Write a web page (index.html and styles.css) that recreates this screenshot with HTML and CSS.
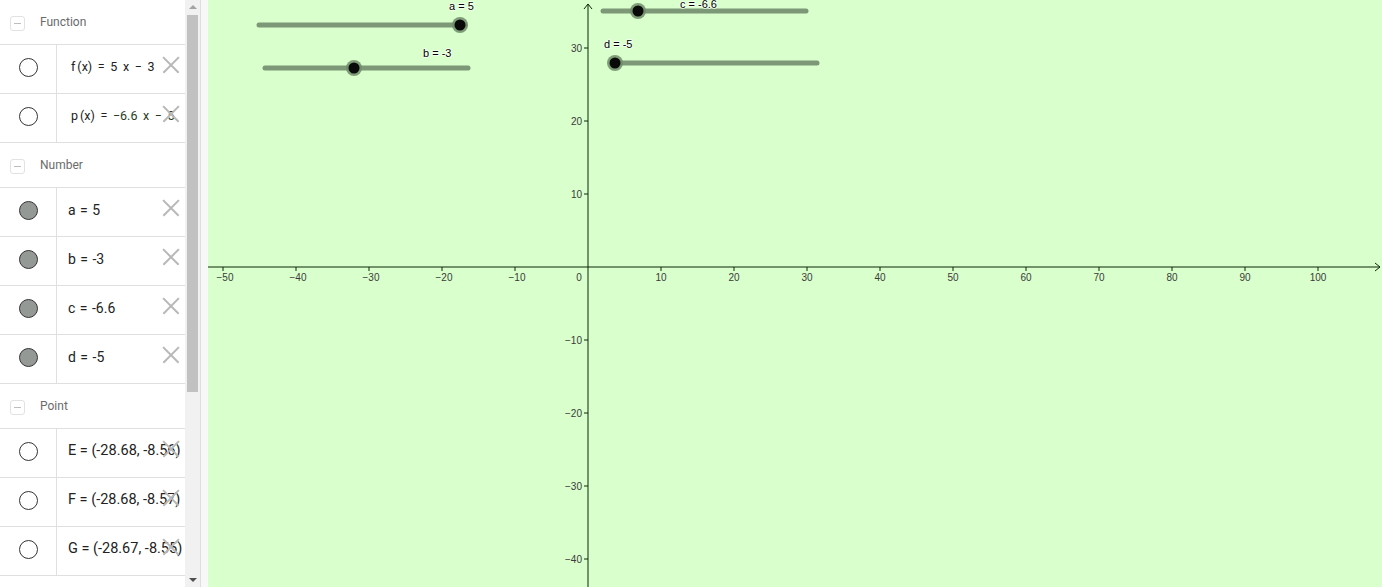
FILE: index.html
```html
<!DOCTYPE html>
<html>
<head>
<meta charset="utf-8">
<link rel="stylesheet" href="styles.css">
</head>
<body>
<div class="app">
  <div class="algebra">
    <div class="group-head first"><span class="toggle"></span><span class="gname">Function</span></div>
    <div class="item"><div class="marble"><span class="circle"></span></div><div class="expr fn">f<span class="sp">(x)</span> = 5 x − 3</div><span class="del"></span></div>
    <div class="item"><div class="marble"><span class="circle"></span></div><div class="expr fn">p<span class="sp">(x)</span> = <span class="g">−6.6 x − 5</span></div><span class="del"></span></div>
    <div class="group-head"><span class="toggle"></span><span class="gname">Number</span></div>
    <div class="item"><div class="marble"><span class="circle filled"></span></div><div class="expr num">a = 5</div><span class="del"></span></div>
    <div class="item"><div class="marble"><span class="circle filled"></span></div><div class="expr num">b = -3</div><span class="del"></span></div>
    <div class="item"><div class="marble"><span class="circle filled"></span></div><div class="expr num">c = -6.6</div><span class="del"></span></div>
    <div class="item"><div class="marble"><span class="circle filled"></span></div><div class="expr num">d = -5</div><span class="del"></span></div>
    <div class="group-head"><span class="toggle"></span><span class="gname">Point</span></div>
    <div class="item"><div class="marble"><span class="circle"></span></div><div class="expr pt">E = (-28.68, -8.56)</div><span class="del"></span></div>
    <div class="item"><div class="marble"><span class="circle"></span></div><div class="expr pt">F = (-28.68, -8.57)</div><span class="del"></span></div>
    <div class="item last"><div class="marble"><span class="circle"></span></div><div class="expr pt">G = (-28.67, -8.55)</div><span class="del"></span></div>
  </div>
  <div class="scrollbar">
    <span class="arrow up"></span>
    <div class="thumb"></div>
    <span class="arrow down"></span>
  </div>
  <div class="splitter"></div>
  <div class="graphics">
    <svg class="canvas" width="1174" height="587" viewBox="0 0 1174 587">
      <g class="axes">
        <line x1="0" y1="267" x2="1172" y2="267"/>
        <polyline class="arrowhead" points="1167,263 1172,267 1167,271"/>
        <line x1="380" y1="4" x2="380" y2="587"/>
        <polyline class="arrowhead" points="376,9 380,4 384,9"/>
        <line x1="15" y1="267" x2="15" y2="271"/>
        <line x1="88" y1="267" x2="88" y2="271"/>
        <line x1="161" y1="267" x2="161" y2="271"/>
        <line x1="234" y1="267" x2="234" y2="271"/>
        <line x1="307" y1="267" x2="307" y2="271"/>
        <line x1="453" y1="267" x2="453" y2="271"/>
        <line x1="526" y1="267" x2="526" y2="271"/>
        <line x1="599" y1="267" x2="599" y2="271"/>
        <line x1="672" y1="267" x2="672" y2="271"/>
        <line x1="745" y1="267" x2="745" y2="271"/>
        <line x1="818" y1="267" x2="818" y2="271"/>
        <line x1="891" y1="267" x2="891" y2="271"/>
        <line x1="964" y1="267" x2="964" y2="271"/>
        <line x1="1037" y1="267" x2="1037" y2="271"/>
        <line x1="1110" y1="267" x2="1110" y2="271"/>
        <line x1="376" y1="48" x2="380" y2="48"/>
        <line x1="376" y1="121" x2="380" y2="121"/>
        <line x1="376" y1="194" x2="380" y2="194"/>
        <line x1="376" y1="340" x2="380" y2="340"/>
        <line x1="376" y1="413" x2="380" y2="413"/>
        <line x1="376" y1="486" x2="380" y2="486"/>
        <line x1="376" y1="559" x2="380" y2="559"/>
      </g>
      <g class="xlabels">
        <text x="17" y="281">−50</text>
        <text x="90" y="281">−40</text>
        <text x="163" y="281">−30</text>
        <text x="236" y="281">−20</text>
        <text x="309" y="281">−10</text>
        <text x="371" y="281">0</text>
        <text x="453" y="281">10</text>
        <text x="526" y="281">20</text>
        <text x="599" y="281">30</text>
        <text x="672" y="281">40</text>
        <text x="745" y="281">50</text>
        <text x="818" y="281">60</text>
        <text x="891" y="281">70</text>
        <text x="964" y="281">80</text>
        <text x="1037" y="281">90</text>
        <text x="1110" y="281">100</text>
      </g>
      <g class="ylabels">
        <text x="374" y="52">30</text>
        <text x="374" y="125">20</text>
        <text x="374" y="198">10</text>
        <text x="374" y="344">−10</text>
        <text x="374" y="417">−20</text>
        <text x="374" y="490">−30</text>
        <text x="374" y="563">−40</text>
      </g>
      <g class="slider">
        <line class="track" x1="51" y1="25" x2="257" y2="25"/>
        <circle class="halo" cx="252" cy="25" r="8"/>
        <circle class="knob" cx="252" cy="25" r="5.5"/>
        <text class="slabel" x="241" y="10">a = 5</text>
      </g>
      <g class="slider">
        <line class="track" x1="57" y1="68" x2="260" y2="68"/>
        <circle class="halo" cx="146" cy="68" r="8"/>
        <circle class="knob" cx="146" cy="68" r="5.5"/>
        <text class="slabel" x="215" y="57">b = -3</text>
      </g>
      <g class="slider">
        <line class="track" x1="395" y1="11" x2="598" y2="11"/>
        <circle class="halo" cx="430" cy="11" r="8"/>
        <circle class="knob" cx="430" cy="11" r="5.5"/>
        <text class="slabel" x="472" y="8">c = -6.6</text>
      </g>
      <g class="slider">
        <line class="track" x1="408" y1="63" x2="609" y2="63"/>
        <circle class="halo" cx="407" cy="63" r="8"/>
        <circle class="knob" cx="407" cy="63" r="5.5"/>
        <text class="slabel" x="396" y="48">d = -5</text>
      </g>
    </svg>
  </div>
</div>
</body>
</html>
```

FILE: styles.css
```css
html, body {
  margin: 0;
  padding: 0;
  width: 1382px;
  height: 587px;
  overflow: hidden;
  background: #fff;
}

.app {
  display: flex;
  width: 1382px;
  height: 587px;
  font-family: Roboto, "Noto Sans", "Liberation Sans", sans-serif;
}

.algebra {
  width: 185px;
  flex: none;
  background: #fff;
  overflow: hidden;
  display: flex;
  flex-direction: column;
}

.group-head {
  height: 44px;
  flex: none;
  border-top: 1px solid #e0e0e0;
  display: flex;
  align-items: center;
  padding-left: 10px;
  gap: 15px;
}
.group-head.first {
  border-top: none;
}

.toggle {
  width: 13px;
  height: 13px;
  border: 1px solid #e2e2e2;
  border-radius: 3px;
  position: relative;
  flex: none;
  margin-top: 2px;
}
.toggle::after {
  content: "";
  position: absolute;
  left: 3px;
  top: 6px;
  width: 7px;
  height: 1px;
  background: #bdbdbd;
}

.gname {
  font-size: 12px;
  color: #6b6b6b;
}

.item {
  height: 48px;
  flex: none;
  border-top: 1px solid #e0e0e0;
  display: flex;
  align-items: center;
  position: relative;
}
.item.last {
  border-bottom: 1px solid #e0e0e0;
}

.marble {
  width: 56px;
  height: 100%;
  flex: none;
  border-right: 1px solid #e0e0e0;
  display: flex;
  align-items: center;
  justify-content: center;
}

.circle {
  width: 17px;
  height: 17px;
  border: 1.5px solid #333;
  border-radius: 50%;
  box-sizing: content-box;
  margin-top: -4px;
}
.circle.filled {
  background: #959995;
}

.expr {
  white-space: nowrap;
  color: #222;
  margin-top: -5px;
}
.expr.fn {
  font-size: 12.5px;
  padding-left: 14px;
  word-spacing: 2.5px;
}
.expr.fn .sp {
  margin-left: 2px;
}
.expr.fn .g {
  color: #2a3a22;
}
.expr.num {
  font-size: 14px;
  padding-left: 11px;
  word-spacing: 1px;
}
.expr.pt {
  font-size: 14.5px;
  padding-left: 11px;
  word-spacing: 0;
}

.del {
  position: absolute;
  left: 163px;
  top: 12px;
  width: 16px;
  height: 16px;
}
.del::before,
.del::after {
  content: "";
  position: absolute;
  left: -3px;
  top: 7px;
  width: 22px;
  height: 1.6px;
  background: #b8b8b8;
  transform: rotate(45deg);
}
.del::after {
  transform: rotate(-45deg);
}

.scrollbar {
  width: 15px;
  flex: none;
  background: #f1f1f1;
  display: flex;
  flex-direction: column;
  align-items: center;
}
.arrow {
  width: 0;
  height: 0;
  border-left: 4px solid transparent;
  border-right: 4px solid transparent;
  flex: none;
}
.arrow.up {
  border-bottom: 4px solid #a3a3a3;
  margin-top: 5px;
}
.arrow.down {
  border-top: 4px solid #505050;
  margin-top: auto;
  margin-bottom: 5px;
}
.thumb {
  width: 11px;
  height: 377px;
  margin-top: 6px;
  background: #c1c1c1;
}

.splitter {
  width: 7px;
  flex: none;
  border-left: 1px solid #dedede;
  background: #f8f8f8;
}

.graphics {
  flex: 1;
  background: #d9ffcc;
  overflow: hidden;
}

.canvas {
  display: block;
}

.axes line,
.axes polyline {
  stroke: #0d2606;
  stroke-width: 1;
  fill: none;
}

.xlabels text,
.ylabels text {
  font-family: "Liberation Sans", Arial, sans-serif;
  font-size: 10px;
  fill: #3a3a3a;
}
.xlabels text {
  text-anchor: middle;
}
.ylabels text {
  text-anchor: end;
}

.track {
  stroke: #7d9876;
  stroke-width: 5;
  stroke-linecap: round;
}
.halo {
  fill: #6f8c69;
  opacity: 0.85;
}
.knob {
  fill: #0a0a0a;
}
.slabel {
  font-family: "Liberation Sans", Arial, sans-serif;
  font-size: 11px;
  fill: #000;
  stroke: #ffffff;
  stroke-width: 1.6px;
  stroke-opacity: 0.8;
  paint-order: stroke;
}
```
